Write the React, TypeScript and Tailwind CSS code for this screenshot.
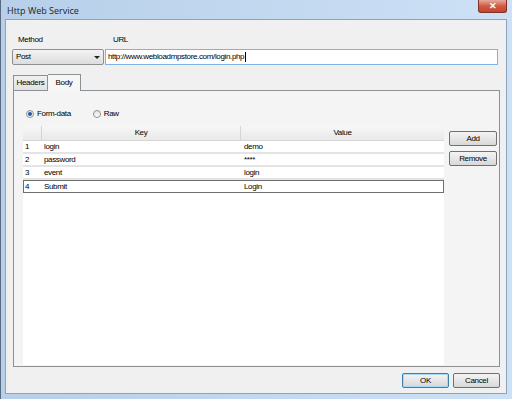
import React from 'react';

const rows = [
  { n: 1, key: 'login', value: 'demo' },
  { n: 2, key: 'password', value: '****' },
  { n: 3, key: 'event', value: 'login' },
  { n: 4, key: 'Submit', value: 'Login' }
];

const Radio: React.FC<{ checked?: boolean; label: string }> = ({ checked, label }) => (
  <label className="flex items-center gap-[3px]">
    <span className="w-[8px] h-[8px] rounded-full border border-[#8e8f8f] bg-gradient-to-b from-[#e6e6e6] to-[#fbfbfb] flex items-center justify-center">
      {checked && <span className="w-[4px] h-[4px] rounded-full bg-[#1b5bab]" />}
    </span>
    <span>{label}</span>
  </label>
);

const Button: React.FC<{ label: string; primary?: boolean; className?: string }> = ({ label, primary, className }) => (
  <button
    className={`h-[15px] rounded-[2px] border bg-gradient-to-b from-[#f4f4f4] to-[#d8d8d8] text-black flex items-center justify-center ${
      primary ? 'border-[#3c7fb1] shadow-[inset_0_0_0_1px_#a9d9f5]' : 'border-[#707070]'
    } ${className ?? ''}`}
  >
    {label}
  </button>
);

export default function App() {
  return (
    <div
      className="w-[512px] h-[399px] bg-gradient-to-r from-[#b7cfe9] to-[#cde1f6] border-l border-[#5a6a80] flex flex-col text-[8px] tracking-[-0.35px] text-black leading-none overflow-hidden"
      style={{ fontFamily: '"Liberation Sans", Arial, sans-serif' }}
    >
      {/* Title bar */}
      <div className="h-[19px] flex items-start justify-between pl-[6px] pr-[5px]">
        <span className="mt-[6px] text-[9px] tracking-normal text-[#1e1e1e]" style={{ fontFamily: '"Open Sans", sans-serif' }}>
          Http Web Service
        </span>
        <div className="w-[29px] h-[13px] rounded-b-[3px] border border-t-0 border-[#7d3127] bg-gradient-to-b from-[#e5a99c] via-[#d25a44] to-[#c2442e] flex items-center justify-center text-white text-[9px] font-bold">
          ✕
        </div>
      </div>

      {/* Client area */}
      <div className="flex-1 ml-[4px] mr-[5px] mb-[5px] border border-[#8da2bc] bg-[#f0f0f0] flex flex-col">
        {/* Method / URL */}
        <div className="flex mt-[16px] ml-[12px]">
          <span className="w-[95px]">Method</span>
          <span>URL</span>
        </div>
        <div className="flex mt-[5px] ml-[6px] mr-[8px] h-[16px]">
          <div className="w-[92px] rounded-[2px] border border-[#8e8f8f] bg-gradient-to-b from-[#f3f3f3] to-[#dddddd] flex items-center justify-between pl-[3px] pr-[3px]">
            <span>Post</span>
            <span className="w-0 h-0 border-l-[3px] border-r-[3px] border-t-[3px] border-l-transparent border-r-transparent border-t-[#222]" />
          </div>
          <div className="flex-1 ml-[1px] border border-[#7fb3e4] bg-white flex items-center pl-[2px]">
            <span>http://www.webloadmpstore.com/login.php</span>
            <span className="w-px h-[10px] bg-black ml-[1px]" />
          </div>
        </div>

        {/* Tabs */}
        <div className="flex mt-[8px] ml-[7px] items-end h-[17px]">
          <div className="h-[15px] w-[35px] border border-b-0 border-[#8c9196] bg-gradient-to-b from-[#f0f0f0] to-[#e2e2e2] flex items-center justify-center">
            Headers
          </div>
          <div className="h-[17px] w-[33px] border border-b-0 border-l-0 border-[#8c9196] bg-[#f6f6f6] flex items-center justify-center relative top-px z-10">
            Body
          </div>
        </div>

        {/* Tab panel */}
        <div className="ml-[7px] mr-[6px] h-[277px] border border-[#8c9196] bg-[#f4f4f4] flex flex-col">
          <div className="flex gap-[22px] mt-[19px] ml-[12px]">
            <Radio checked label="Form-data" />
            <Radio label="Raw" />
          </div>

          <div className="flex flex-1 mt-[8px] ml-[9px] mb-[1px]">
            {/* Grid */}
            <div className="w-[421px] bg-white flex flex-col">
              <div className="flex h-[15px] bg-gradient-to-b from-[#f7f7f7] to-[#e9e9e9] border-b border-[#d5d5d5]">
                <div className="w-[19px] border-r border-[#d5d5d5]" />
                <div className="w-[199px] border-r border-[#d5d5d5] flex items-center justify-center">Key</div>
                <div className="flex-1 flex items-center justify-center">Value</div>
              </div>
              {rows.map((r) => {
                const last = r.n === 4;
                return (
                  <div
                    key={r.n}
                    className={`flex h-[13px] items-center ${
                      last ? 'border border-[#6f6f6f]' : 'border-b-2 border-[#e4e4e4]'
                    }`}
                  >
                    <span className={last ? 'w-[18px] pl-px' : 'w-[19px] pl-[2px]'}>{r.n}</span>
                    <span className="w-[199px] pl-[2px]">{r.key}</span>
                    <span className="flex-1 pl-[3px]">{r.value}</span>
                  </div>
                );
              })}
            </div>

            {/* Side buttons */}
            <div className="flex flex-col gap-[5px] ml-[5px] mt-[5px]">
              <Button label="Add" className="w-[48px]" />
              <Button label="Remove" className="w-[48px]" />
            </div>
          </div>
        </div>

        {/* Footer */}
        <div className="flex justify-end gap-[4px] mt-[6px] mr-[6px]">
          <Button label="OK" primary className="w-[47px]" />
          <Button label="Cancel" className="w-[47px]" />
        </div>
      </div>
    </div>
  );
}
